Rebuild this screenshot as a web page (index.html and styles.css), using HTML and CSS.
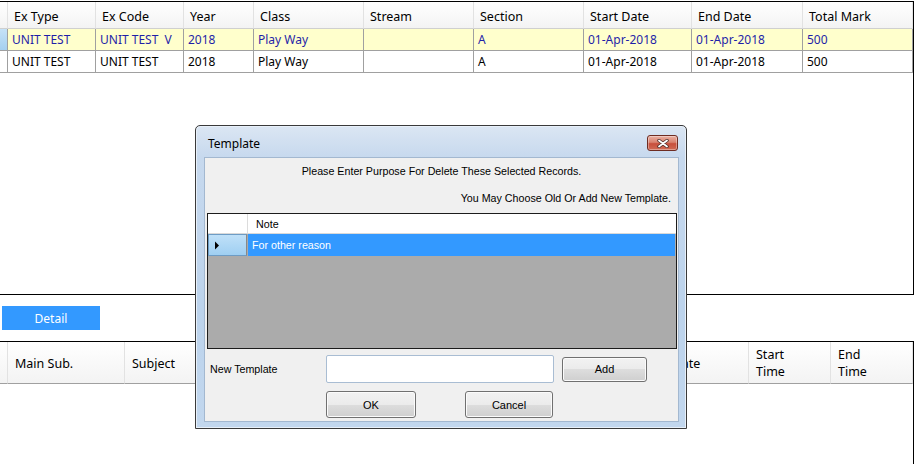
FILE: index.html
```html
<!DOCTYPE html>
<html lang="en">

<head>
    <meta charset="UTF-8">
    <title>Exam list</title>
    <link rel="stylesheet" href="styles.css">
</head>

<body>

    <section id="eksamener" class="grid">
        <table>
            <colgroup>
                <col style="width:8px">
                <col style="width:88px">
                <col style="width:88px">
                <col style="width:70px">
                <col style="width:110px">
                <col style="width:110px">
                <col style="width:110px">
                <col style="width:108px">
                <col style="width:111px">
                <col style="width:110px">
            </colgroup>
            <thead>
                <tr>
                    <th class="rh"></th>
                    <th>Ex Type</th>
                    <th>Ex Code</th>
                    <th>Year</th>
                    <th>Class</th>
                    <th>Stream</th>
                    <th>Section</th>
                    <th>Start Date</th>
                    <th>End Date</th>
                    <th>Total Mark</th>
                </tr>
            </thead>
            <tbody>
                <tr class="valgt">
                    <td class="rh"></td>
                    <td>UNIT TEST</td>
                    <td>UNIT TEST&nbsp;&nbsp;V</td>
                    <td>2018</td>
                    <td>Play Way</td>
                    <td></td>
                    <td>A</td>
                    <td>01-Apr-2018</td>
                    <td>01-Apr-2018</td>
                    <td>500</td>
                </tr>
                <tr>
                    <td class="rh"></td>
                    <td>UNIT TEST</td>
                    <td>UNIT TEST</td>
                    <td>2018</td>
                    <td>Play Way</td>
                    <td></td>
                    <td>A</td>
                    <td>01-Apr-2018</td>
                    <td>01-Apr-2018</td>
                    <td>500</td>
                </tr>
            </tbody>
        </table>
    </section>

    <div class="bar">
        <button class="detail">Detail</button>
    </div>

    <section id="fag" class="grid">
        <table>
            <colgroup>
                <col style="width:8px">
                <col style="width:117px">
                <col style="width:110px">
                <col style="width:110px">
                <col style="width:110px">
                <col style="width:85px">
                <col style="width:90px">
                <col style="width:119px">
                <col style="width:82px">
                <col style="width:82px">
            </colgroup>
            <thead>
                <tr>
                    <th class="rh"></th>
                    <th>Main Sub.</th>
                    <th>Subject</th>
                    <th></th>
                    <th></th>
                    <th></th>
                    <th></th>
                    <th>Exam Date</th>
                    <th>Start<br>Time</th>
                    <th>End<br>Time</th>
                </tr>
            </thead>
        </table>
    </section>

    <div class="dialog">
        <div class="titlebar">
            <span>Template</span>
            <button class="luk">
                <svg width="12" height="9" viewBox="0 0 12 9">
                    <path d="M2 1.5 L10 7.5 M10 1.5 L2 7.5" stroke="#4a2a26" stroke-width="3.4" stroke-linecap="round" />
                    <path d="M2 1.5 L10 7.5 M10 1.5 L2 7.5" stroke="#ffffff" stroke-width="1.8" stroke-linecap="round" />
                </svg>
            </button>
        </div>
        <div class="client">
            <p class="msg1">Please Enter Purpose For Delete These Selected Records.</p>
            <p class="msg2">You May Choose Old Or Add New Template.</p>

            <div class="noter">
                <div class="noter-head">
                    <span class="rh"></span>
                    <span class="celle">Note</span>
                </div>
                <div class="noter-row">
                    <span class="rh">
                        <svg width="6" height="9" viewBox="0 0 6 9">
                            <path d="M1 0.5 L5 4.5 L1 8.5 Z" fill="#000" />
                        </svg>
                    </span>
                    <span class="celle">For other reason</span>
                </div>
            </div>

            <div class="ny-row">
                <label>New Template</label>
                <input type="text">
                <button class="win add">Add</button>
            </div>

            <div class="knap-row">
                <button class="win ok">OK</button>
                <button class="win cancel">Cancel</button>
            </div>
        </div>
    </div>

</body>

</html>
```

FILE: styles.css
```css
body {
    margin: 0;
    height: 464px;
    overflow: hidden;
    background-color: #ffffff;
    font-family: "Noto Sans", sans-serif;
    color: #000;
}

/* store grids */

.grid {
    width: 913px;
    border: 1px solid #000;
    border-left: none;
    overflow: hidden;
}

#eksamener {
    margin-top: 1px;
    height: 292px;
}

#fag {
    height: 130px;
}

table {
    border-collapse: separate;
    border-spacing: 0;
    table-layout: fixed;
    width: 913px;
}

th {
    height: 24px;
    padding: 2px 0 0 6px;
    text-align: left;
    font-weight: normal;
    font-size: 12.5px;
    white-space: nowrap;
    overflow: hidden;
    background: linear-gradient(#ffffff, #f3f3f3);
    border-right: 1px solid #e2e2e2;
    border-bottom: 1px solid #cfcfcf;
}

td {
    height: 21px;
    padding: 0 0 0 4px;
    font-size: 12px;
    white-space: nowrap;
    overflow: hidden;
    border-right: 1px solid #a0a0a0;
    border-bottom: 1px solid #a0a0a0;
}

th.rh,
td.rh {
    padding: 0;
}

.valgt td {
    background-color: #ffffcc;
    color: #1f1fa8;
}

.valgt td.rh {
    background: linear-gradient(#c6e2f7, #a5d0f0);
}

#fag th {
    height: 40px;
    padding: 1px 0 0 7px;
    line-height: 17px;
    border-bottom: 1px solid #a0a0a0;
}

#fag th.rh {
    padding: 0;
}

/* detail knap */

.bar {
    padding: 11px 0 11px 2px;
    height: 24px;
}

.detail {
    width: 98px;
    height: 24px;
    border: none;
    background-color: #3399ff;
    color: #ffffff;
    font-family: "Noto Sans", sans-serif;
    font-size: 12px;
    padding: 1px 0 0;
}

/* dialog */

.dialog {
    position: absolute;
    left: 195px;
    top: 125px;
    width: 492px;
    height: 304px;
    box-sizing: border-box;
    border: 1px solid #3a3a3a;
    border-radius: 5px 5px 0 0;
    padding: 0 7px 6px 8px;
    background: linear-gradient(#dbe6f3, #c7d9ee 31px, #bcd3ec 60%, #c2d7ee);
    box-shadow: inset 0 0 0 1px #e8f0f9;
}

.titlebar {
    display: flex;
    justify-content: space-between;
    align-items: center;
    height: 31px;
    padding-left: 4px;
    font-size: 12px;
}

.titlebar span {
    margin-top: 3px;
}

.luk {
    align-self: flex-start;
    margin-top: 9px;
    margin-right: 1px;
    width: 31px;
    height: 16px;
    padding: 0;
    display: flex;
    align-items: center;
    justify-content: center;
    border: 1px solid #6e2c22;
    border-radius: 3px;
    background: linear-gradient(#eab0a2, #d9826f 45%, #c84f3b 55%, #d06b55);
    box-shadow: inset 0 0 0 1px rgba(255, 255, 255, 0.35);
}

.client {
    height: 265px;
    box-sizing: border-box;
    border: 1px solid #a3b8d0;
    background-color: #f0f0f0;
    font-family: "Liberation Sans", Arial, sans-serif;
    font-size: 10.7px;
}

.client p {
    margin: 0;
    line-height: 13px;
}

.msg1 {
    padding-top: 7px;
    text-align: center;
}

.msg2 {
    margin-top: 14px !important;
    padding-right: 7px;
    text-align: right;
}

.noter {
    margin: 8px 1px 0 2px;
    height: 136px;
    box-sizing: border-box;
    border: 1px solid #1c1c1c;
    background-color: #ababab;
}

.noter-head,
.noter-row {
    display: flex;
}

.noter-head {
    height: 19px;
    background-color: #ffffff;
    border-bottom: 1px solid #d9d9d9;
    align-items: center;
}

.noter-head .rh {
    width: 39px;
    height: 19px;
    border-right: 1px solid #dcdcdc;
}

.noter-head .celle {
    padding: 1px 0 0 8px;
}

.noter-row {
    height: 22px;
}

.noter-row .rh {
    width: 39px;
    box-sizing: border-box;
    border: 1px solid #6d9cc5;
    border-right-color: #888;
    background: linear-gradient(#bfe0f8, #9fcff2);
    display: flex;
    align-items: center;
    padding-left: 5px;
    margin-right: 1px;
}

.noter-row .celle {
    flex: 1;
    margin-right: 1px;
    background-color: #3399ff;
    color: #ffffff;
    padding-left: 4px;
    line-height: 23px;
}

.ny-row {
    display: flex;
    align-items: center;
    margin-top: 6px;
    height: 28px;
}

.ny-row label {
    width: 116px;
    padding-left: 5px;
}

.ny-row input {
    width: 228px;
    height: 28px;
    box-sizing: border-box;
    margin: 0;
    border: 1px solid #a9bdd3;
    border-radius: 2px;
    background-color: #ffffff;
}

.win {
    box-sizing: border-box;
    padding: 0;
    border: 1px solid #707070;
    border-radius: 3px;
    background: linear-gradient(#f2f2f2, #ebebeb 50%, #dddddd 50%, #cfcfcf);
    box-shadow: inset 0 0 0 1px #fbfbfb;
    font-family: "Liberation Sans", Arial, sans-serif;
    font-size: 11px;
    color: #000;
}

.add {
    margin-left: 8px;
    width: 85px;
    height: 25px;
}

.knap-row {
    display: flex;
    margin-top: 8px;
}

.ok {
    margin-left: 121px;
    width: 90px;
    height: 27px;
}

.cancel {
    margin-left: 49px;
    width: 88px;
    height: 27px;
}
```
